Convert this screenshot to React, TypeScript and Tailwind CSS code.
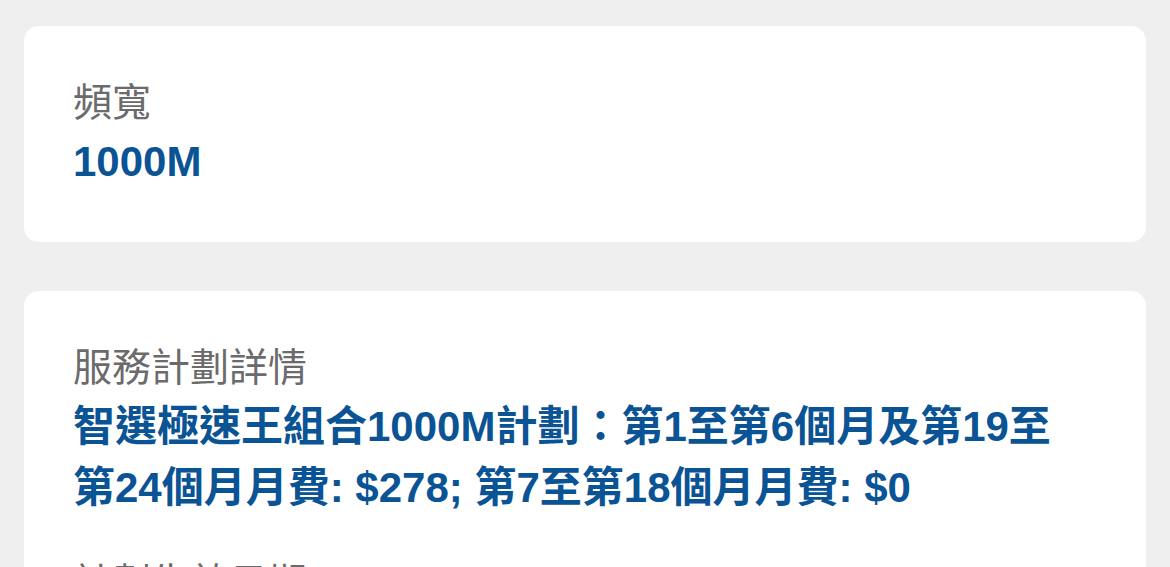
const font = { fontFamily: '"Liberation Sans", "Noto Sans CJK TC", sans-serif' };

type Field = { label: string; value: string };

function InfoCard({ fields }: { fields: Field[] }) {
  return (
    <div className="bg-white rounded-[15px] pl-[49px] pr-[60px] pt-[48px] pb-[50px] flex flex-col gap-[36px]">
      {fields.map((f) => (
        <div key={f.label} className="flex flex-col">
          <div className="text-[39px] leading-[57px] text-[#6b6b6b]">{f.label}</div>
          <div className="text-[42px] leading-[61px] font-bold text-[#0a5394]">{f.value}</div>
        </div>
      ))}
    </div>
  );
}

export default function App() {
  return (
    <div className="min-h-screen bg-[#efefef] px-[24px] pt-[26px] flex flex-col gap-[49px]" style={font}>
      <InfoCard fields={[{ label: '頻寬', value: '1000M' }]} />
      <InfoCard
        fields={[
          {
            label: '服務計劃詳情',
            value: '智選極速王組合1000M計劃：第1至第6個月及第19至第24個月月費: $278; 第7至第18個月月費: $0',
          },
          { label: '計劃生效日期', value: '2023年1月1日' },
        ]}
      />
    </div>
  );
}
